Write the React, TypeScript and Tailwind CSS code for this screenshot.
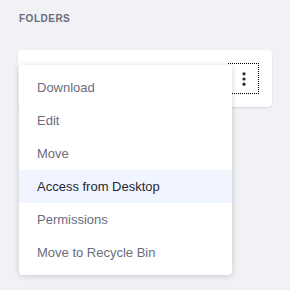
const ITEMS = [
  "Download",
  "Edit",
  "Move",
  "Access from Desktop",
  "Permissions",
  "Move to Recycle Bin",
];

const ACTIVE = "Access from Desktop";

function KebabIcon() {
  return (
    <svg width="4" height="14" viewBox="0 0 4 14" fill="#272833">
      <circle cx="2" cy="1.8" r="1.6" />
      <circle cx="2" cy="7" r="1.6" />
      <circle cx="2" cy="12.2" r="1.6" />
    </svg>
  );
}

export default function App() {
  return (
    <div className="w-[290px] h-[290px] bg-[#f1f2f5] font-['Liberation_Sans',Arial,sans-serif] px-[18px] pt-[13px]">
      <h3 className="pl-px text-[10px] font-bold leading-[12px] tracking-[0.5px] text-[#6b6c7e] uppercase">
        Folders
      </h3>
      <div className="relative mt-[25px] rounded-[4px] bg-white shadow-[0_1px_2px_rgba(0,0,0,0.12)] p-[13px] flex justify-end">
        <button className="w-[31px] h-[31px] flex items-center justify-center border border-dotted border-black">
          <KebabIcon />
        </button>
        <div className="absolute left-px top-[15px] w-[213px] rounded-[4px] bg-white shadow-[0_1px_6px_rgba(0,0,0,0.18)] py-[6px]">
          {ITEMS.map((item) => (
            <div
              key={item}
              className={
                item === ACTIVE
                  ? "h-[33px] flex items-center pl-[18px] pt-px text-[13px] text-[#272833] bg-[#f0f5ff]"
                  : "h-[33px] flex items-center pl-[18px] pt-px text-[13px] text-[#6b6c7e]"
              }
            >
              {item}
            </div>
          ))}
        </div>
      </div>
    </div>
  );
}
